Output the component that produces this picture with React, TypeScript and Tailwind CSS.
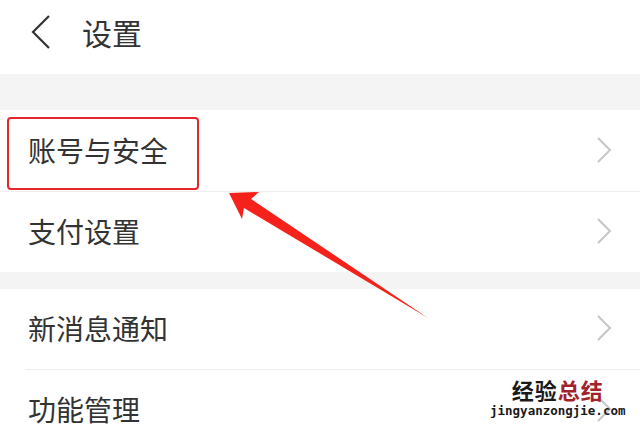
import React from 'react';

const Chevron = () => (
  <svg width="18" height="28" viewBox="0 0 18 28" className="shrink-0">
    <path d="M3 2 L15 14 L3 26" fill="none" stroke="#c6c6c6" strokeWidth="2" />
  </svg>
);

const Row = ({ label, divider, inset }: { label: string; divider?: boolean; inset?: boolean }) => (
  <div className="bg-white">
    <div className="flex h-[80px] items-center justify-between pb-[3px] pl-[28px] pr-[27px]">
      <span className="text-[28px] leading-none text-[#333]">{label}</span>
      <Chevron />
    </div>
    {divider && <div className={`h-px bg-[#eeeeee] ${inset ? 'ml-[25px]' : ''}`} />}
  </div>
);

export default function App() {
  return (
    <div
      className="relative h-[427px] w-[640px] overflow-hidden bg-[#f4f4f4]"
      style={{ fontFamily: '"Noto Sans CJK SC", "Noto Sans", sans-serif' }}
    >
      {/* header */}
      <div className="flex h-[74px] items-center bg-white pb-[10px] pl-[30px]">
        <svg width="22" height="34" viewBox="0 0 22 34">
          <path d="M19 1 L3 17 L19 33" fill="none" stroke="#333" strokeWidth="2.2" />
        </svg>
        <span className="ml-[30px] text-[30px] leading-none text-[#333]">设置</span>
      </div>

      <div className="h-[36px]" />

      <div className="bg-white pt-[1px]">
        <Row label="账号与安全" divider />
        <Row label="支付设置" />
      </div>

      <div className="h-[17px]" />

      <Row label="新消息通知" divider inset />
      <Row label="功能管理" />

      {/* highlight box */}
      <div className="absolute left-[7px] top-[117px] h-[73px] w-[192px] rounded-[4px] border-[2.5px] border-[#e5262a]" />

      {/* arrow */}
      <svg className="absolute left-0 top-0" width="640" height="427" viewBox="0 0 640 427">
        <polygon points="229,193 259,192 251,199 428,318 244,208 242,219" fill="#f5211b" />
      </svg>

      {/* watermark */}
      <div className="absolute left-[490px] top-[378px] flex flex-col items-center gap-[4px]">
        <div className="text-[22px] font-bold leading-[22px] tracking-[1px]">
          <span className="text-[#1a1a1a]">经验</span>
          <span className="text-[#a3232a]">总结</span>
        </div>
        <div
          className="text-[12.5px] font-bold leading-[13px] text-[#1a1a1a]"
          style={{ fontFamily: '"DejaVu Sans Mono", monospace' }}
        >
          jingyanzongjie.com
        </div>
      </div>
    </div>
  );
}
